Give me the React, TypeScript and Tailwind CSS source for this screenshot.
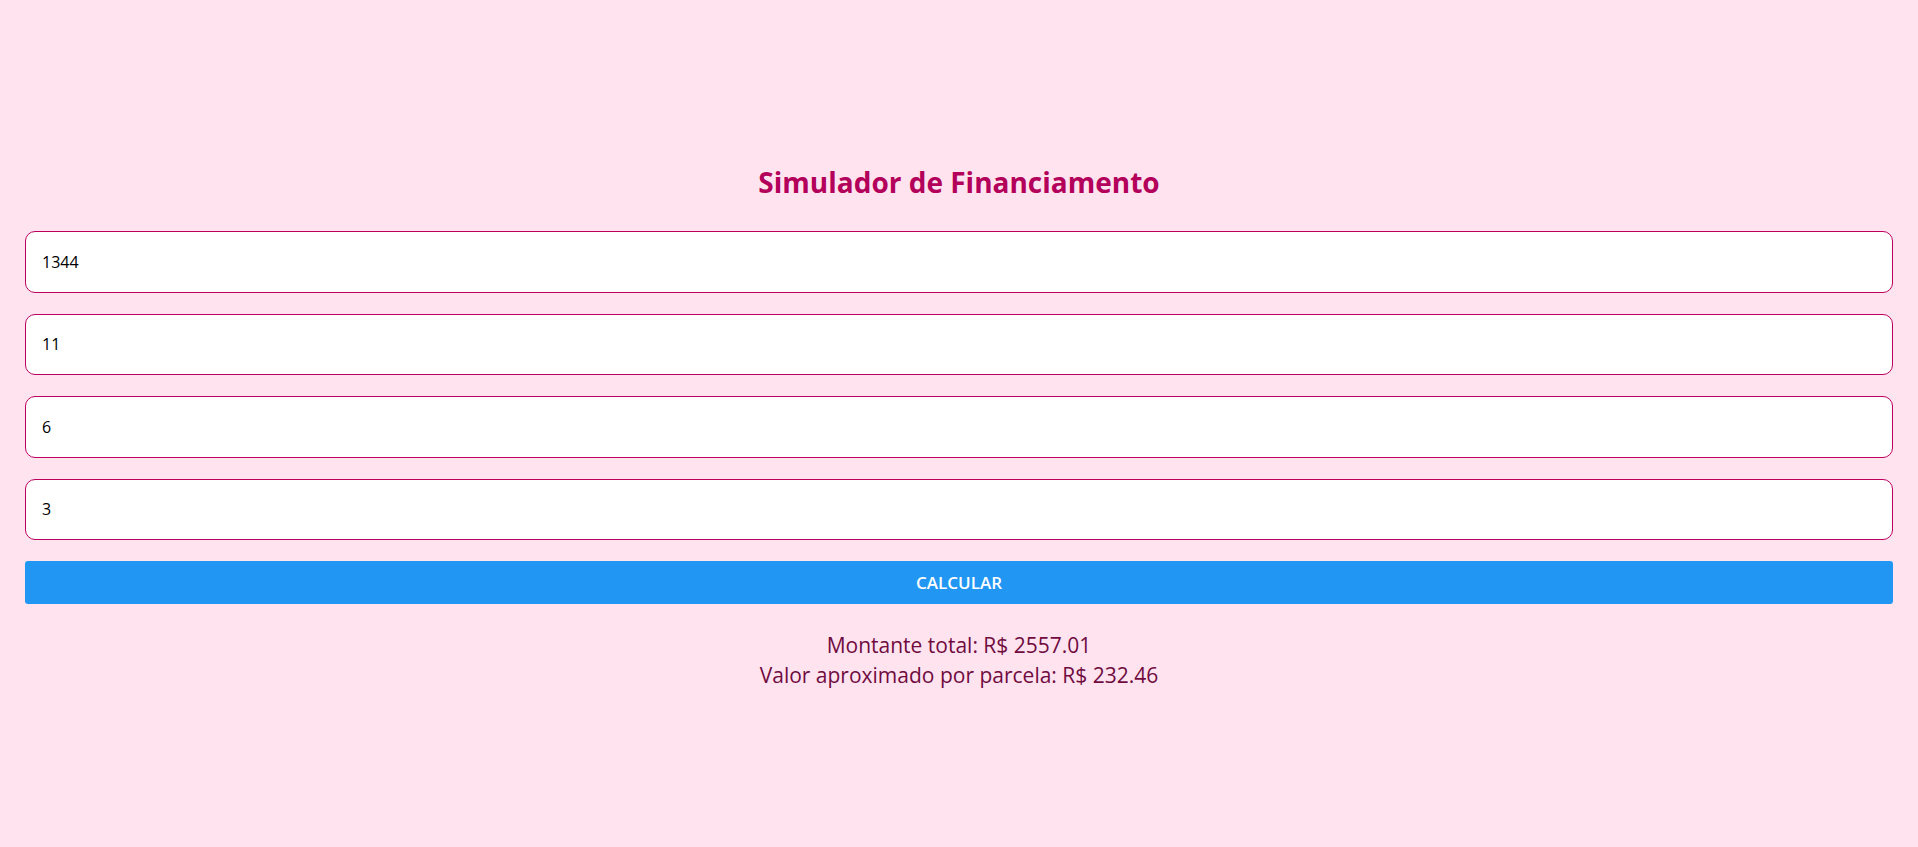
export default function App() {
    const valores = ["1344", "11", "6", "3"];

    return (
        <main className="min-h-screen w-full bg-[#ffe4f0] font-['Open_Sans',sans-serif]">
            <div className="px-[25px] pt-[158px]">
                <h1 className="text-center text-[28px] leading-[48px] font-bold text-[#b3005a]">
                    Simulador de Financiamento
                </h1>
                <form className="mt-[25px] flex flex-col gap-[21px]" onSubmit={(e) => e.preventDefault()}>
                    {valores.map((v, i) => (
                        <input
                            key={i}
                            type="text"
                            defaultValue={v}
                            className="h-[61.5px] w-full rounded-[10px] border border-[#bd0060] bg-white px-4 text-[16px] text-black outline-none"
                        />
                    ))}
                    <button
                        type="submit"
                        className="h-[43px] w-full rounded-[3px] bg-[#2196f3] text-[17px] font-semibold uppercase text-white"
                    >
                        Calcular
                    </button>
                </form>
                <div className="mt-[26px] text-center text-[21px] leading-[30px] text-[#700b40]">
                    <p>Montante total: R$ 2557.01</p>
                    <p>Valor aproximado por parcela: R$ 232.46</p>
                </div>
            </div>
        </main>
    );
}
